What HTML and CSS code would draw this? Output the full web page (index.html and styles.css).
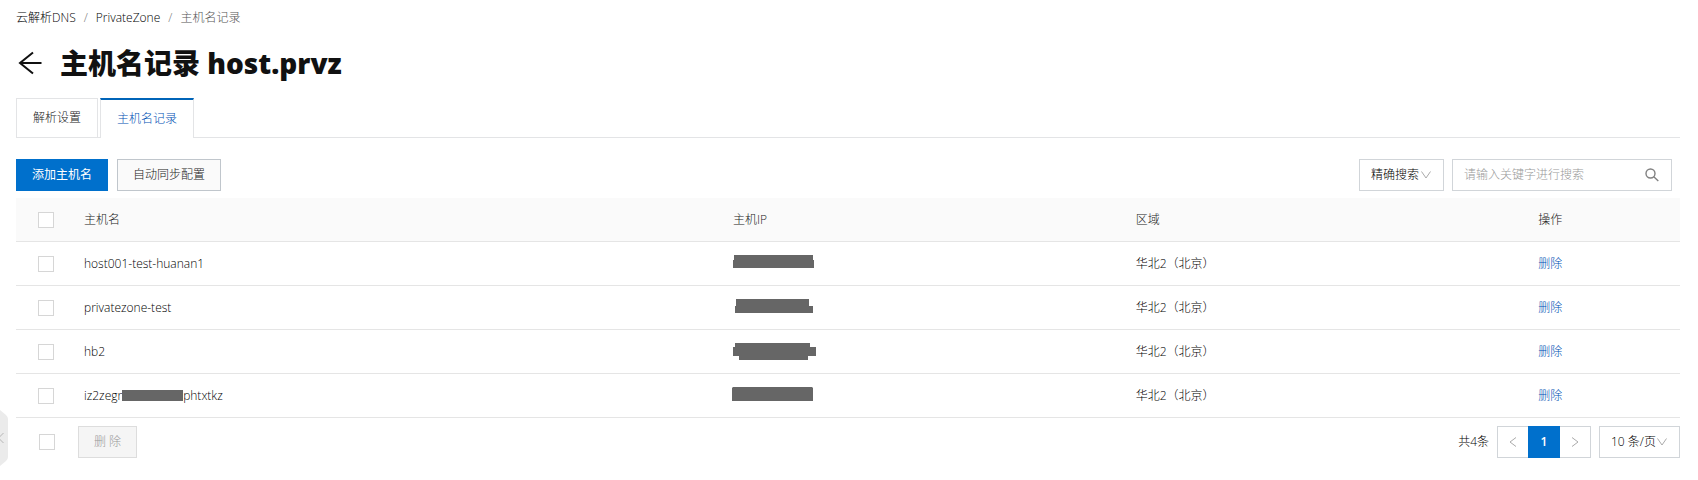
FILE: index.html
```html
<!DOCTYPE html>
<html lang="zh-CN">
<head>
  <meta charset="UTF-8" />
  <title>主机名记录</title>
  <meta name="viewport" content="width=device-width, initial-scale=1.0" />
  <link rel="stylesheet" href="styles.css">
</head>
<body>
  <button class="side-toggle" type="button" aria-label="展开">
    <svg width="8" height="56" viewBox="0 0 8 56">
      <path d="M0 0 L6 5 Q8 7 8 9 V47 Q8 49 6 51 L0 56 Z" fill="#ebebeb"/>
      <path d="M3.5 23 L-1.5 28 L3.5 33" fill="none" stroke="#b5b5b5"/>
    </svg>
  </button>

  <main class="page">
    <nav class="breadcrumb">
      <a href="#">云解析DNS</a>
      <span class="slash">/</span>
      <a href="#">PrivateZone</a>
      <span class="slash">/</span>
      <span class="current">主机名记录</span>
    </nav>

    <header class="page-header">
      <a href="#" class="back" aria-label="返回">
        <svg width="24" height="24" viewBox="0 0 24 24" fill="none" stroke="#111" stroke-width="2">
          <path d="M23.5 12 H1.5 M15 1.5 L2 12 L15 22.5"/>
        </svg>
      </a>
      <h1>主机名记录 host.prvz</h1>
    </header>

    <div class="tabs">
      <a href="#" class="tab">解析设置</a>
      <a href="#" class="tab active">主机名记录</a>
    </div>

    <div class="toolbar">
      <button class="btn btn-primary" type="button">添加主机名</button>
      <button class="btn" type="button">自动同步配置</button>
      <div class="search">
        <div class="select">
          <select aria-label="搜索方式">
            <option>精确搜索</option>
          </select>
          <svg class="chevron" width="10" height="8" viewBox="0 0 10 8"><path d="M0.5 0.5 L5 7 L9.5 0.5"/></svg>
        </div>
        <div class="search-box">
          <input type="text" placeholder="请输入关键字进行搜索" aria-label="关键字">
          <svg width="14" height="14" viewBox="0 0 14 14" fill="none" stroke="#808080" stroke-width="1.4">
            <circle cx="5.5" cy="5.5" r="4.5"/>
            <path d="M8.8 8.8 L13.3 13"/>
          </svg>
        </div>
      </div>
    </div>

    <table class="records">
      <thead>
        <tr>
          <th class="col-check"><input type="checkbox" aria-label="全选"></th>
          <th class="col-name">主机名</th>
          <th class="col-ip">主机IP</th>
          <th class="col-region">区域</th>
          <th>操作</th>
        </tr>
      </thead>
      <tbody>
        <tr>
          <td><input type="checkbox" aria-label="host001-test-huanan1"></td>
          <td>host001-test-huanan1</td>
          <td><svg class="mask" width="84" height="18" viewBox="0 0 84 18"><path d="M1 0 H80 V5 H81 V13 H0 V5 H1 Z"/></svg></td>
          <td>华北2（北京）</td>
          <td><a href="#">删除</a></td>
        </tr>
        <tr>
          <td><input type="checkbox" aria-label="privatezone-test"></td>
          <td>privatezone-test</td>
          <td><svg class="mask" width="84" height="18" viewBox="0 0 84 18"><path d="M3 0 H76 V7 H80 V14 H2 V7 H3 Z"/></svg></td>
          <td>华北2（北京）</td>
          <td><a href="#">删除</a></td>
        </tr>
        <tr>
          <td><input type="checkbox" aria-label="hb2"></td>
          <td>hb2</td>
          <td><svg class="mask" width="84" height="18" viewBox="0 0 84 18"><path d="M2 0 H77 V4 H83 V13 H75 V17 H6 V13 H0 V4 H2 Z"/></svg></td>
          <td>华北2（北京）</td>
          <td><a href="#">删除</a></td>
        </tr>
        <tr>
          <td><input type="checkbox" aria-label="iz2zegr"></td>
          <td>iz2zegr<svg class="mask-inline" width="61" height="12" viewBox="0 0 61 12"><path d="M0 0 H61 V11 H0 Z"/></svg>phtxtkz</td>
          <td><svg class="mask" width="84" height="18" viewBox="0 0 84 18"><path d="M0 0 H79 L80 1 V14 H-1 V1 Z"/></svg></td>
          <td>华北2（北京）</td>
          <td><a href="#">删除</a></td>
        </tr>
      </tbody>
    </table>

    <footer class="table-footer">
      <input type="checkbox" aria-label="全选">
      <button class="btn btn-delete" type="button" disabled>删 除</button>
      <div class="pagination">
        <span class="total">共4条</span>
        <div class="pager">
          <button type="button" aria-label="上一页">
            <svg width="8" height="10" viewBox="0 0 8 10"><path d="M7 0.5 L1 5 L7 9.5"/></svg>
          </button>
          <button type="button" class="active">1</button>
          <button type="button" aria-label="下一页">
            <svg width="8" height="10" viewBox="0 0 8 10"><path d="M1 0.5 L7 5 L1 9.5"/></svg>
          </button>
        </div>
        <div class="select">
          <select aria-label="每页条数">
            <option>10 条/页</option>
          </select>
          <svg class="chevron" width="10" height="8" viewBox="0 0 10 8"><path d="M0.5 0.5 L5 7 L9.5 0.5"/></svg>
        </div>
      </div>
    </footer>
  </main>
</body>
</html>
```

FILE: styles.css
```css
* {
  margin: 0;
  padding: 0;
  box-sizing: border-box;
}
body {
  background: #fff;
  color: #000;
  font-family: "Open Sans", "Noto Sans CJK SC", sans-serif;
  font-size: 12px;
  font-weight: 300;
  line-height: 18px;
}
a {
  color: #0050b4;
  text-decoration: none;
}
button, input, select {
  font: inherit;
  color: inherit;
  border-radius: 0;
}
button {
  cursor: pointer;
}
svg {
  display: block;
}
.page {
  padding: 9px 18px 22px 16px;
}

/* collapsed drawer handle on the left edge */
.side-toggle {
  position: absolute;
  top: 410px;
  left: 0;
  border: 0;
  background: none;
}

.breadcrumb {
  display: flex;
  gap: 8px;
}
.breadcrumb a {
  color: #000;
}
.breadcrumb .slash {
  color: #777;
}
.breadcrumb .current {
  color: #555;
}

.page-header {
  display: flex;
  align-items: center;
  gap: 18px;
  margin-top: 16px;
  padding-left: 2px;
}
h1 {
  color: #111;
  font-size: 28px;
  font-weight: 800;
  line-height: 40px;
}

.tabs {
  display: flex;
  gap: 2px;
  margin-top: 15px;
  border-bottom: 1px solid #e3e4e6;
}
.tab {
  padding: 10px 16px;
  border: 1px solid #e3e4e6;
  border-bottom: 0;
  color: #222;
}
.tab.active {
  margin-bottom: -1px;
  border-top: 2px solid #0064b8;
  background: #fff;
  color: #0050b4;
}

.toolbar {
  display: flex;
  gap: 9px;
  margin-top: 21px;
  padding-right: 8px;
}
.btn {
  height: 32px;
  padding: 0 15px;
  border: 1px solid #c0c6cc;
  background: #fafafa;
  color: #222;
}
.btn-primary {
  border-color: #0070cc;
  background: #0070cc;
  color: #fff;
  font-weight: 400;
}
.btn-delete {
  border-color: #ddd;
  background: #f5f5f5;
  color: #999;
}
.search {
  display: flex;
  gap: 8px;
  margin-left: auto;
}
.select {
  position: relative;
}
.select select {
  height: 32px;
  padding: 0 23px 0 11px;
  border: 1px solid #d1d5d9;
  background: #fff;
  appearance: none;
}
.chevron {
  position: absolute;
  top: 12px;
  right: 13px;
  pointer-events: none;
}
.chevron path, .pager path {
  fill: none;
  stroke: #aaa;
}
.search-box {
  display: flex;
  align-items: center;
  width: 220px;
  height: 32px;
  padding: 0 12px 0 11px;
  border: 1px solid #d1d5d9;
}
.search-box input {
  flex: 1;
  min-width: 0;
  border: 0;
  outline: 0;
}
.search-box input::placeholder {
  color: #999;
}

input[type="checkbox"] {
  display: block;
  width: 16px;
  height: 16px;
  border: 1px solid #d6d6d6;
  background: #fff;
  appearance: none;
}
input[type="checkbox"]:checked {
  background: #0070cc;
}

.records {
  width: 100%;
  margin-top: 7px;
  border-spacing: 0;
  table-layout: fixed;
}
.records th, .records td {
  height: 44px;
  padding: 0 16px;
  border-bottom: 1px solid #e5e5e5;
  text-align: left;
}
.records th {
  background: #fafafa;
  color: #222;
  font-weight: 300;
}
.records th:first-child, .records td:first-child {
  padding: 0 0 0 22px;
}
.col-check {
  width: 52px;
}
.col-name {
  width: 39%;
}
.col-ip, .col-region {
  width: 24.2%;
}
.mask, .mask-inline {
  fill: #666;
}
.mask {
  overflow: visible;
}
.mask-inline {
  display: inline-block;
  vertical-align: middle;
}

.table-footer {
  display: flex;
  align-items: center;
  margin-top: 8px;
  padding-left: 23px;
}
.table-footer .btn-delete {
  margin-left: 23px;
}
.pagination {
  display: flex;
  align-items: center;
  gap: 8px;
  margin-left: auto;
}
.pager {
  display: flex;
}
.pager button {
  display: flex;
  align-items: center;
  justify-content: center;
  width: 31px;
  height: 32px;
  border: 1px solid #d1d5d9;
  background: #fff;
}
.pager button:first-child {
  border-right: 0;
}
.pager button:last-child {
  border-left: 0;
}
.pager .active {
  width: 32px;
  border-color: #0070cc;
  background: #0070cc;
  color: #fff;
  font-weight: 600;
}
```
